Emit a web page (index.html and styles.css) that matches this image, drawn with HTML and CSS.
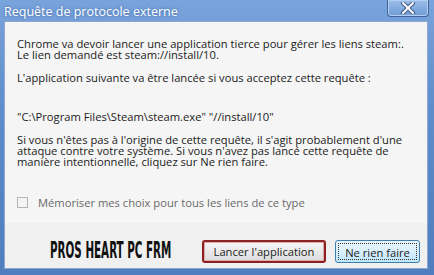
FILE: index.html
```html
<!DOCTYPE html>
<html>
    <head>
        <meta charset="UTF-8" />
        <title>Requête de protocole externe</title>
        <link rel="stylesheet" href="styles.css">
    </head>
    <body>
    <div class="window">
        <div class="titlebar">
            <span class="title">Requête de protocole externe</span>
            <div class="close">
                <svg width="16" height="12" viewBox="0 0 16 12">
                    <path d="M3 1 L13 11 M13 1 L3 11" stroke="#3c5a86" stroke-width="4" stroke-linecap="round"/>
                    <path d="M3 1 L13 11 M13 1 L3 11" stroke="#ffffff" stroke-width="2" stroke-linecap="round"/>
                </svg>
            </div>
        </div>
        <div class="frame">
            <div class="message">
                <p>Chrome va devoir lancer une application tierce pour gérer les liens steam:.<br>Le lien demandé est steam://install/10.</p>
                <p>L'application suivante va être lancée si vous acceptez cette requête :</p>
                <p class="command">"C:\Program Files\Steam\steam.exe" "//install/10"</p>
                <p>Si vous n'êtes pas à l'origine de cette requête, il s'agit probablement d'une attaque contre votre système. Si vous n'avez pas lancé cette requête de manière intentionnelle, cliquez sur Ne rien faire.</p>
                <label class="remember"><span class="box"></span>Mémoriser mes choix pour tous les liens de ce type</label>
            </div>
            <div class="actions">
                <div class="tag-slot"><span class="tag">PROS HEART PC FRM</span></div>
                <button class="btn btn-launch">Lancer l'application</button>
                <button class="btn btn-cancel"><span>Ne rien faire</span></button>
            </div>
        </div>
    </div>
    </body>
</html>
```
FILE: styles.css
```css
    body{
        margin: 0;
        font-family: "Open Sans", "Noto Sans", sans-serif;
    }
    .window{
        width: 434px;
        height: 275px;
        box-sizing: border-box;
        padding: 0 6px 6px 4px;
        background: linear-gradient(#79a3db, #5f8ccb 40%, #4f7dbd);
        display: flex;
        flex-direction: column;
    }
    .titlebar{
        height: 21px;
        display: flex;
        align-items: flex-start;
        justify-content: space-between;
    }
    .title{
        color: #ffffff;
        font-size: 12.5px;
        line-height: 15px;
        margin-top: 4px;
        text-shadow: 0 0 3px #3b66a8;
    }
    .close{
        width: 40px;
        height: 16px;
        margin-right: -1px;
        border: 1px solid #3f659c;
        border-top: none;
        border-radius: 0 0 4px 4px;
        background: linear-gradient(#9cbde8, #6e9ad6);
        box-shadow: inset 0 0 0 1px #b6cff0;
        display: flex;
        align-items: center;
        justify-content: center;
    }
    .frame{
        flex: 1;
        background: #f0f0f0;
        border: 1px solid #8aa8cf;
        display: flex;
        flex-direction: column;
    }
    .message{
        background: #f5f5f5;
        padding: 16px 12px 0 12px;
        height: 201px;
        flex-shrink: 0;
        box-sizing: border-box;
        color: #1b1b1b;
        font-size: 11.2px;
        line-height: 11px;
    }
    .message p{
        margin: 0 0 12px 0;
    }
    .message .command{
        margin: 28px 0 12px 0;
    }
    .remember{
        display: flex;
        align-items: center;
        margin-top: 30px;
        color: #6a6a6a;
    }
    .box{
        width: 9px;
        height: 9px;
        border: 1px solid #b4b4b4;
        background: #f4f4f4;
        margin-right: 10px;
    }
    .actions{
        flex: 1;
        display: flex;
        align-items: center;
        padding: 11px 7px 0 45px;
    }
    .tag-slot{
        flex: 1;
        min-width: 0;
    }
    .tag{
        display: inline-block;
        font-family: "DejaVu Sans Condensed", "DejaVu Sans", sans-serif;
        font-weight: bold;
        font-size: 23px;
        line-height: 20px;
        color: #111111;
        transform: scaleX(0.5);
        transform-origin: left center;
        white-space: nowrap;
    }
    .btn{
        height: 23px;
        flex-shrink: 0;
        font-family: "Open Sans", "Noto Sans", sans-serif;
        font-size: 11.2px;
        color: #1b1b1b;
        border-radius: 3px;
        padding: 0;
        white-space: nowrap;
        cursor: pointer;
    }
    .btn-launch{
        width: 124px;
        border: 2px solid #8e2222;
        box-shadow: inset 0 0 0 1px #e0a8a8;
        background: linear-gradient(#f6f6f6, #e9e9e9 50%, #dcdcdc);
        margin-right: 9px;
    }
    .btn-cancel{
        width: 85px;
        border: 1px solid #3c7fb1;
        background: linear-gradient(#eaf6fd, #d9f0fc 50%, #bee6fd);
        padding: 2px;
    }
    .btn-cancel span{
        display: block;
        height: 100%;
        line-height: 17px;
        border: 1px dotted #333333;
        box-sizing: border-box;
    }
```
